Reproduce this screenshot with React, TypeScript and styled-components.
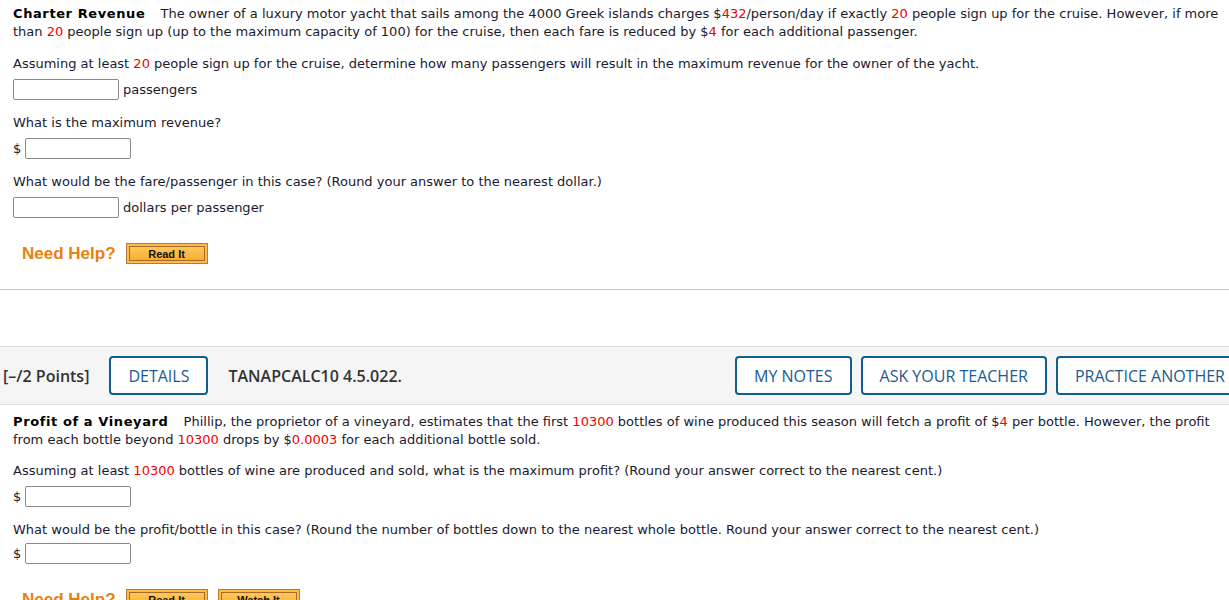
import styled, { createGlobalStyle } from "styled-components";
import type { ReactNode } from "react";

const GlobalStyle = createGlobalStyle`
  body {
    margin: 0;
    background: #fff;
    overflow: hidden;
    font-family: Verdana, "DejaVu Sans", sans-serif;
    color: #1a1a2e;
  }
`;

const Page = styled.div`
  width: 1249px;
`;

const Question = styled.div<{ $top: number }>`
  padding: ${(p) => p.$top}px 13px 0 13px;
  font-size: 13px;
  line-height: 18px;
`;

const Para = styled.p<{ $gap?: number }>`
  margin: 0 0 ${(p) => p.$gap ?? 6}px 0;
`;

const Title = styled.b`
  color: #000;
  letter-spacing: 0.6px;
  margin-right: 11px;
`;

const Red = styled.span`
  color: #f00000;
`;

const AnswerRow = styled.div`
  display: flex;
  align-items: center;
  gap: 4px;
  height: 21px;
  margin-bottom: 14px;
`;

const Input = styled.input`
  box-sizing: border-box;
  width: 106px;
  height: 21px;
  margin: 0;
  border: 1px solid #8a8a8a;
  border-radius: 2px;
  background: #fff;
`;

const HelpRow = styled.div`
  display: flex;
  align-items: center;
  gap: 10px;
  height: 21px;
  padding-left: 9px;
  margin-top: 25px;
`;

const HelpLabel = styled.span`
  font-family: "Liberation Sans", Arial, sans-serif;
  font-weight: bold;
  font-size: 17px;
  color: #ea800e;
`;

const HelpButton = styled.span`
  box-sizing: border-box;
  display: inline-flex;
  width: 82px;
  height: 21px;
  padding: 2px;
  border: 1px solid #b87a36;
  background: #fdbb48;
`;

const HelpButtonFace = styled.span`
  flex: 1;
  display: flex;
  align-items: center;
  justify-content: center;
  border: 1px solid #a8692a;
  background: linear-gradient(#ffc85a, #f9ad30);
  font-family: "Liberation Sans", Arial, sans-serif;
  font-weight: bold;
  font-size: 11px;
  color: #111;
`;

const Divider = styled.hr`
  margin: 25px 0 0 0;
  border: 0;
  border-top: 1px solid #cccccc;
`;

const HeaderBand = styled.div`
  margin-top: 56px;
  height: 57px;
  display: flex;
  align-items: center;
  gap: 20px;
  padding: 0 5px 0 3px;
  background: #f5f5f5;
  border-top: 1px solid #dddddd;
  border-bottom: 1px solid #dddddd;
  font-family: "Open Sans", sans-serif;
  font-size: 16px;
`;

const Points = styled.span`
  font-weight: 600;
  color: #333;
`;

const Code = styled.span`
  font-weight: 600;
  color: #333;
`;

const RightGroup = styled.div`
  margin-left: auto;
  display: flex;
  gap: 9px;
`;

const OutlineButton = styled.button`
  box-sizing: border-box;
  height: 39px;
  padding: 0 17px;
  border: 2px solid #0f5e92;
  border-radius: 4px;
  background: #fff;
  font-family: "Open Sans", sans-serif;
  font-size: 16px;
  color: #1c5b8c;
  white-space: nowrap;
`;

const Help = ({ watch }: { watch?: boolean }) => (
  <HelpRow>
    <HelpLabel>Need Help?</HelpLabel>
    <HelpButton>
      <HelpButtonFace>Read It</HelpButtonFace>
    </HelpButton>
    {watch && (
      <HelpButton>
        <HelpButtonFace>Watch It</HelpButtonFace>
      </HelpButton>
    )}
  </HelpRow>
);

const Answer = ({ prefix, suffix }: { prefix?: ReactNode; suffix?: ReactNode }) => (
  <AnswerRow>
    {prefix && <span>{prefix}</span>}
    <Input />
    {suffix && <span>{suffix}</span>}
  </AnswerRow>
);

export default function App() {
  return (
    <Page>
      <GlobalStyle />
      <Question $top={5}>
        <Para $gap={14}>
          <Title>Charter Revenue</Title> The owner of a luxury motor yacht that sails among the 4000
          Greek islands charges $<Red>432</Red>/person/day if exactly <Red>20</Red> people sign up
          for the cruise. However, if more than <Red>20</Red> people sign up (up to the maximum
          capacity of 100) for the cruise, then each fare is reduced by $<Red>4</Red> for each
          additional passenger.
        </Para>
        <Para>
          Assuming at least <Red>20</Red> people sign up for the cruise, determine how many
          passengers will result in the maximum revenue for the owner of the yacht.
        </Para>
        <Answer suffix="passengers" />
        <Para $gap={6}>What is the maximum revenue?</Para>
        <Answer prefix="$" />
        <Para>
          What would be the fare/passenger in this case? (Round your answer to the nearest dollar.)
        </Para>
        <Answer suffix="dollars per passenger" />
        <Help />
      </Question>
      <Divider />
      <HeaderBand>
        <Points>[–/2 Points]</Points>
        <OutlineButton>DETAILS</OutlineButton>
        <Code>TANAPCALC10 4.5.022.</Code>
        <RightGroup>
          <OutlineButton>MY NOTES</OutlineButton>
          <OutlineButton>ASK YOUR TEACHER</OutlineButton>
          <OutlineButton>PRACTICE ANOTHER</OutlineButton>
        </RightGroup>
      </HeaderBand>
      <Question $top={8}>
        <Para $gap={13}>
          <Title>Profit of a Vineyard</Title> Phillip, the proprietor of a vineyard, estimates that
          the first <Red>10300</Red> bottles of wine produced this season will fetch a profit of $
          <Red>4</Red> per bottle. However, the profit from each bottle beyond <Red>10300</Red>{" "}
          drops by $<Red>0.0003</Red> for each additional bottle sold.
        </Para>
        <Para $gap={6}>
          Assuming at least <Red>10300</Red> bottles of wine are produced and sold, what is the
          maximum profit? (Round your answer correct to the nearest cent.)
        </Para>
        <Answer prefix="$" />
        <Para $gap={4}>
          What would be the profit/bottle in this case? (Round the number of bottles down to the
          nearest whole bottle. Round your answer correct to the nearest cent.)
        </Para>
        <Answer prefix="$" />
        <Help watch />
      </Question>
    </Page>
  );
}
